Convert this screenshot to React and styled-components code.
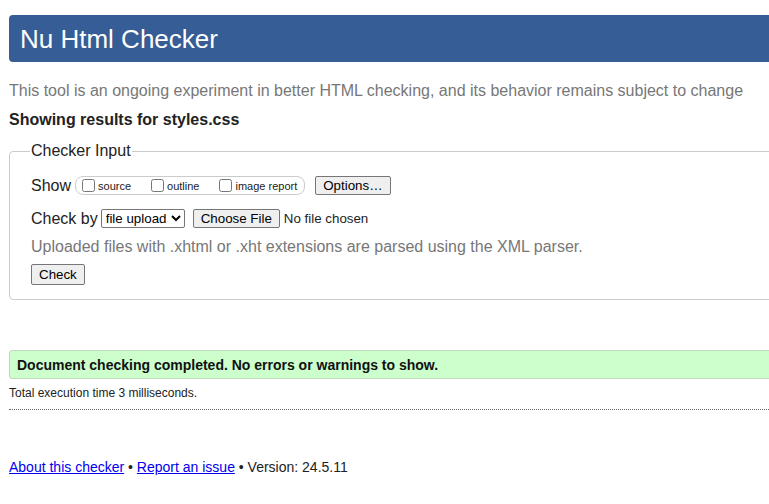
import React from "react";
import styled, { createGlobalStyle } from "styled-components";

const GlobalStyle = createGlobalStyle`
  html, body {
    margin: 0;
    padding: 0;
    overflow: hidden;
    background: #fff;
  }
  body {
    font-family: "Liberation Sans", Arial, sans-serif;
    color: #222;
  }
`;

const Page = styled.div`
  width: 900px;
  padding: 15px 0 0 9px;
`;

const Header = styled.header`
  height: 47px;
  background: #365d95;
  border-radius: 4px 0 0 4px;
  display: flex;
  align-items: center;
  padding-left: 11px;
`;

const Title = styled.h1`
  margin: 0;
  font-size: 26px;
  font-weight: normal;
  color: #fff;
  line-height: 1;
`;

const Intro = styled.p`
  margin: 19px 0 0;
  font-size: 16px;
  line-height: 19px;
  color: #777;
`;

const ResultsFor = styled.p`
  margin: 10px 0 0;
  font-size: 16px;
  line-height: 19px;
  font-weight: bold;
`;

const Fieldset = styled.fieldset`
  margin: 13px 0 0;
  border: 1px solid #ccc;
  border-radius: 4px;
  padding: 6px 21px 14px;
  min-inline-size: 0;
`;

const Legend = styled.legend`
  font-size: 16px;
  padding: 0 1px;
  margin-left: -1px;
`;

const Row = styled.div`
  display: flex;
  align-items: center;
  height: 19px;
  margin-top: ${({ $top }) => $top}px;
  font-size: 16px;
`;

const Label = styled.span`
  margin-right: 4px;
`;

const Pill = styled.span`
  display: inline-flex;
  align-items: center;
  height: 17px;
  border: 1px solid #ccc;
  border-radius: 8px;
  padding: 0 7px 0 4px;
  margin-right: 10px;
`;

const Check = styled.label`
  display: inline-flex;
  align-items: center;
  font-size: 11px;
  margin-right: ${({ $last }) => ($last ? 0 : 18)}px;
  input {
    margin: 0 3px 0 2px;
    width: 13px;
    height: 13px;
  }
`;

const Button = styled.button`
  font-family: "Liberation Sans", Arial, sans-serif;
  font-size: 13.33px;
  padding: 1px 7px;
  height: ${({ $h }) => $h || 19}px;
  margin-right: ${({ $mr }) => $mr || 0}px;
  background: #efefef;
  border: 1px solid #767676;
  border-radius: 2px;
  color: #000;
`;

const Select = styled.select`
  font-family: "Liberation Sans", Arial, sans-serif;
  font-size: 13.33px;
  width: 84px;
  height: 19px;
  margin: 0 8px 0 -1px;
  border: 1px solid #767676;
  border-radius: 2px;
  background: #fff;
  color: #000;
`;

const NoFile = styled.span`
  font-size: 13.33px;
`;

const Hint = styled.p`
  margin: 9px 0 0;
  font-size: 16px;
  line-height: 19px;
  color: #777;
`;

const CheckRow = styled.div`
  margin-top: 8px;
  display: flex;
`;

const Success = styled.div`
  margin-top: 50px;
  height: 27px;
  display: flex;
  align-items: center;
  padding-left: 7px;
  background: #ccffcc;
  border: 1px solid #c0d8c0;
  border-radius: 3px 0 0 3px;
  font-size: 14px;
  font-weight: bold;
  color: #111;
`;

const Timing = styled.p`
  margin: 7px 0 0;
  font-size: 12px;
  line-height: 14px;
  color: #222;
`;

const Rule = styled.hr`
  margin: 9px 0 0;
  border: 0;
  border-top: 1px dotted #666;
  height: 0;
`;

const Footer = styled.p`
  margin: 49px 0 0;
  font-size: 14px;
  line-height: 16px;
  color: #222;
  a {
    color: #0000ee;
  }
`;

export default function App() {
  return (
    <>
      <GlobalStyle />
      <Page>
        <Header>
          <Title>Nu Html Checker</Title>
        </Header>
        <Intro>
          This tool is an ongoing experiment in better HTML checking, and its behavior remains subject to change
        </Intro>
        <ResultsFor>Showing results for styles.css</ResultsFor>
        <Fieldset>
          <Legend>Checker Input</Legend>
          <Row $top={10}>
            <Label>Show</Label>
            <Pill>
              <Check>
                <input type="checkbox" />
                source
              </Check>
              <Check>
                <input type="checkbox" />
                outline
              </Check>
              <Check $last>
                <input type="checkbox" />
                image report
              </Check>
            </Pill>
            <Button type="button">Options…</Button>
          </Row>
          <Row $top={14}>
            <Label>Check by</Label>
            <Select defaultValue="upload">
              <option value="upload">file upload</option>
              <option value="address">address</option>
              <option value="text">text input</option>
            </Select>
            <Button type="button" $mr={4}>Choose File</Button>
            <NoFile>No file chosen</NoFile>
          </Row>
          <Hint>Uploaded files with .xhtml or .xht extensions are parsed using the XML parser.</Hint>
          <CheckRow>
            <Button type="button" $h={21}>Check</Button>
          </CheckRow>
        </Fieldset>
        <Success>Document checking completed. No errors or warnings to show.</Success>
        <Timing>Total execution time 3 milliseconds.</Timing>
        <Rule />
        <Footer>
          <a href="#about">About this checker</a> • <a href="#issue">Report an issue</a> • Version: 24.5.11
        </Footer>
      </Page>
    </>
  );
}
